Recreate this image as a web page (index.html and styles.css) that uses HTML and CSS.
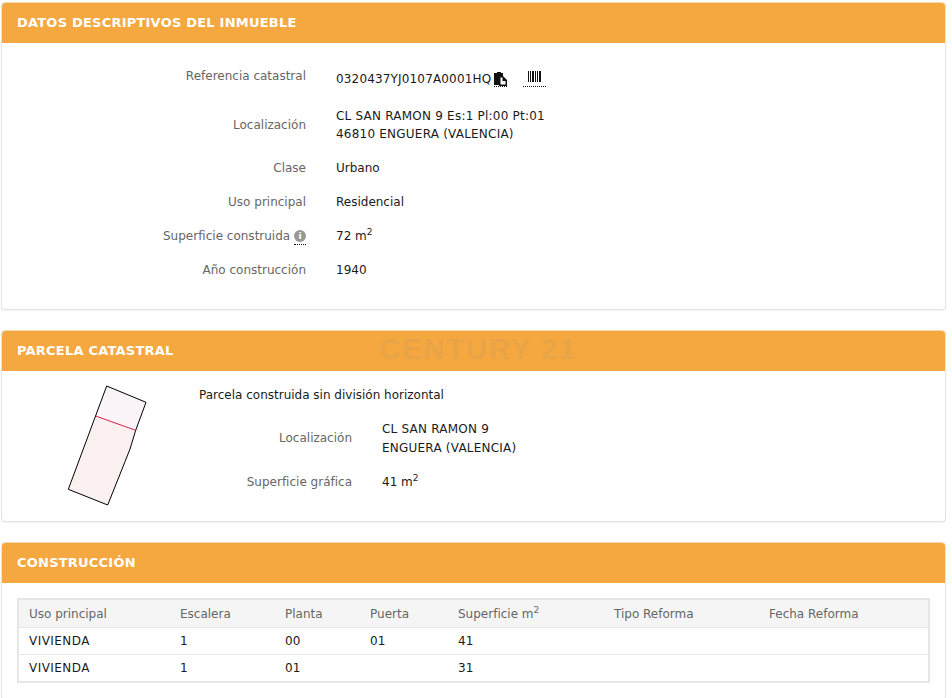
FILE: index.html
```html
<!DOCTYPE html>
<html lang="es">
<head>
    <meta charset="UTF-8">
    <title>Datos descriptivos del inmueble</title>
    <link rel="stylesheet" href="styles.css">
</head>
<body>

    <section class="panel">
        <h2 class="panel-title">DATOS DESCRIPTIVOS DEL INMUEBLE</h2>
        <div class="panel-body details">
            <div class="row row-ref">
                <div class="label">Referencia catastral</div>
                <div class="value">
                    <span class="caps-ref">0320437YJ0107A0001HQ</span><a class="tip copy-link"><svg width="13" height="14" viewBox="0 0 13 14"><path d="M0 1h3V0h4v1h2v3H6v9H0z" fill="#111"/><path d="M5 4h4l4 4v6H5z" fill="#111"/><path d="M6.500 5.500h2V9H11.500v3.500h-5z" fill="#fff"/></svg></a><a class="tip barcode-link"><svg width="13" height="11" viewBox="0 0 13 11"><path d="M0 0h1v11H0zM2 0h1v11H2zM4 0h2v11H4zM7 0h1v11H7zM9 0h1v11H9zM11 0h2v11h-2z" fill="#111"/></svg></a>
                </div>
            </div>
            <div class="row">
                <div class="label label-mid">Localización</div>
                <div class="value caps">CL SAN RAMON 9 Es:1 Pl:00 Pt:01<br>46810 ENGUERA (VALENCIA)</div>
            </div>
            <div class="row">
                <div class="label">Clase</div>
                <div class="value">Urbano</div>
            </div>
            <div class="row">
                <div class="label">Uso principal</div>
                <div class="value">Residencial</div>
            </div>
            <div class="row">
                <div class="label">Superficie construida <a class="tip info-link"><span class="info">i</span></a></div>
                <div class="value">72 m<sup>2</sup></div>
            </div>
            <div class="row">
                <div class="label">Año construcción</div>
                <div class="value">1940</div>
            </div>
        </div>
    </section>

    <section class="panel panel-parcel">
        <h2 class="panel-title">PARCELA CATASTRAL</h2>
        <div class="watermark">CENTURY 21</div>
        <div class="panel-body parcel">
            <svg class="parcel-map" width="80" height="121" viewBox="67 385 80 121">
                <path d="M106.700 386 146 402.300 135.700 430.300 95.700 416z" fill="#faf3f8"/>
                <path d="M95.700 416 135.700 430.300 130 449 125 461.700 107.700 505 68.300 489.300z" fill="#fbf0f0"/>
                <path d="M95.700 416 135.700 430.300" fill="none" stroke="#d9214a" stroke-width="1"/>
                <path d="M106.700 386 146 402.300 135.700 430.300 130 449 125 461.700 107.700 505 68.300 489.300z" fill="none" stroke="#000" stroke-width="1"/>
            </svg>
            <div class="parcel-info">
                <p class="parcel-type">Parcela construida sin división horizontal</p>
                <div class="row">
                    <div class="label label-mid">Localización</div>
                    <div class="value caps">CL SAN RAMON 9<br>ENGUERA (VALENCIA)</div>
                </div>
                <div class="row">
                    <div class="label">Superficie gráfica</div>
                    <div class="value">41 m<sup>2</sup></div>
                </div>
            </div>
        </div>
    </section>

    <section class="panel panel-last">
        <h2 class="panel-title">CONSTRUCCIÓN</h2>
        <div class="panel-body build">
            <table class="build-table">
                <thead>
                    <tr>
                        <th class="col-uso">Uso principal</th>
                        <th class="col-esc">Escalera</th>
                        <th class="col-pla">Planta</th>
                        <th class="col-pue">Puerta</th>
                        <th class="col-sup">Superficie m<sup>2</sup></th>
                        <th class="col-tip">Tipo Reforma</th>
                        <th>Fecha Reforma</th>
                    </tr>
                </thead>
                <tbody>
                    <tr><td class="use">VIVIENDA</td><td>1</td><td>00</td><td>01</td><td>41</td><td></td><td></td></tr>
                    <tr><td class="use">VIVIENDA</td><td>1</td><td>01</td><td></td><td>31</td><td></td><td></td></tr>
                </tbody>
            </table>
        </div>
    </section>

</body>
</html>
```

FILE: styles.css
```css
html, body {
    height: 698px;
    overflow: hidden;
}

body {
    box-sizing: border-box;
    margin: 0;
    padding: 2px 6px 0 1px;
    background-color: #fff;
    color: #1a1a1a;
    font-family: 'DejaVu Sans', Verdana, sans-serif;
    font-size: 12px;
    line-height: 18px;
}

.panel {
    position: relative;
    margin-bottom: 20px;
    background: #fff;
    border: 1px solid #e4e4e4;
    border-top: 0;
    border-radius: 4px;
    box-shadow: 0 1px 1px rgba(0, 0, 0, 0.05);
}

.panel-title {
    height: 41px;
    margin: 0;
    padding: 0 15px;
    background-color: #f5a83f;
    border-top: 1px solid #f3d9b0;
    border-radius: 4px 4px 0 0;
    box-sizing: border-box;
    color: #fff;
    font-size: 13px;
    font-weight: bold;
    letter-spacing: 0.22px;
    line-height: 39px;
}

.panel-body {
    box-sizing: border-box;
}

.details {
    height: 266px;
    padding-top: 16px;
}

.row {
    display: flex;
    padding: 8px 0;
}

.label {
    width: 304px;
    color: #666;
    text-align: right;
}

.label-mid {
    align-self: center;
}

.value {
    margin-left: 30px;
    color: #1a1a1a;
}

/* Verdana capitals run wider than the DejaVu ones */
.caps {
    letter-spacing: 0.22px;
}

.caps-ref {
    letter-spacing: 0.16px;
}

sup {
    font-size: 9px;
    line-height: 0;
}

/* first row sits a bit lower because of the icons */
.row-ref {
    height: 24px;
}

.row-ref .value {
    padding-top: 3px;
}

.tip {
    display: inline-block;
    border-bottom: 1px dotted #111;
    line-height: 0;
}

.copy-link {
    margin-left: 3px;
    vertical-align: -3px;
}

.barcode-link {
    margin-left: 16px;
    padding: 0 5px 4px;
    vertical-align: 1px;
}

.info-link {
    height: 14px;
    margin-top: 3px;
    vertical-align: top;
}

.info {
    display: block;
    width: 12px;
    height: 12px;
    background: #999;
    border-radius: 50%;
    color: #fff;
    font-size: 9px;
    font-weight: bold;
    line-height: 12px;
    text-align: center;
}

.panel-parcel .panel-body {
    height: 150px;
}

.watermark {
    position: absolute;
    top: 5px;
    left: 377px;
    color: rgba(150, 140, 130, 0.14);
    font-family: 'Liberation Sans', Arial, sans-serif;
    font-size: 30px;
    font-weight: bold;
    letter-spacing: 1.3px;
    line-height: 28px;
}

.parcel {
    display: flex;
    padding-left: 65px;
}

.parcel-map {
    flex: none;
    margin-top: 14px;
}

.parcel-info {
    margin-left: 52px;
}

.parcel-type {
    margin: 15px 0 8px;
}

.parcel-info .label {
    width: 153px;
}

.parcel-info .label-mid {
    padding-bottom: 2px;
}

.parcel-info .value {
    line-height: 19px;
}

.parcel-info .row {
    padding-bottom: 7px;
}

.panel-last {
    height: 157px;
    margin-bottom: 0;
}

.build {
    padding: 15px 15px 0;
}

.build-table {
    width: 913px;
    border: 2px solid #e6e6e6;
    border-collapse: collapse;
    table-layout: fixed;
}

.build-table th {
    height: 27px;
    padding: 0 10px;
    background-color: #f5f5f5;
    border-bottom: 1px solid #e6e6e6;
    color: #666;
    font-weight: normal;
    text-align: left;
}

.build-table td {
    height: 26px;
    padding: 0 10px;
    border-bottom: 1px solid #e6e6e6;
    color: #1a1a1a;
}

.build-table .use {
    letter-spacing: 0.45px;
}

.col-uso { width: 131px; }
.col-esc { width: 85px; }
.col-pla { width: 65px; }
.col-pue { width: 68px; }
.col-sup { width: 136px; }
.col-tip { width: 135px; }
```
